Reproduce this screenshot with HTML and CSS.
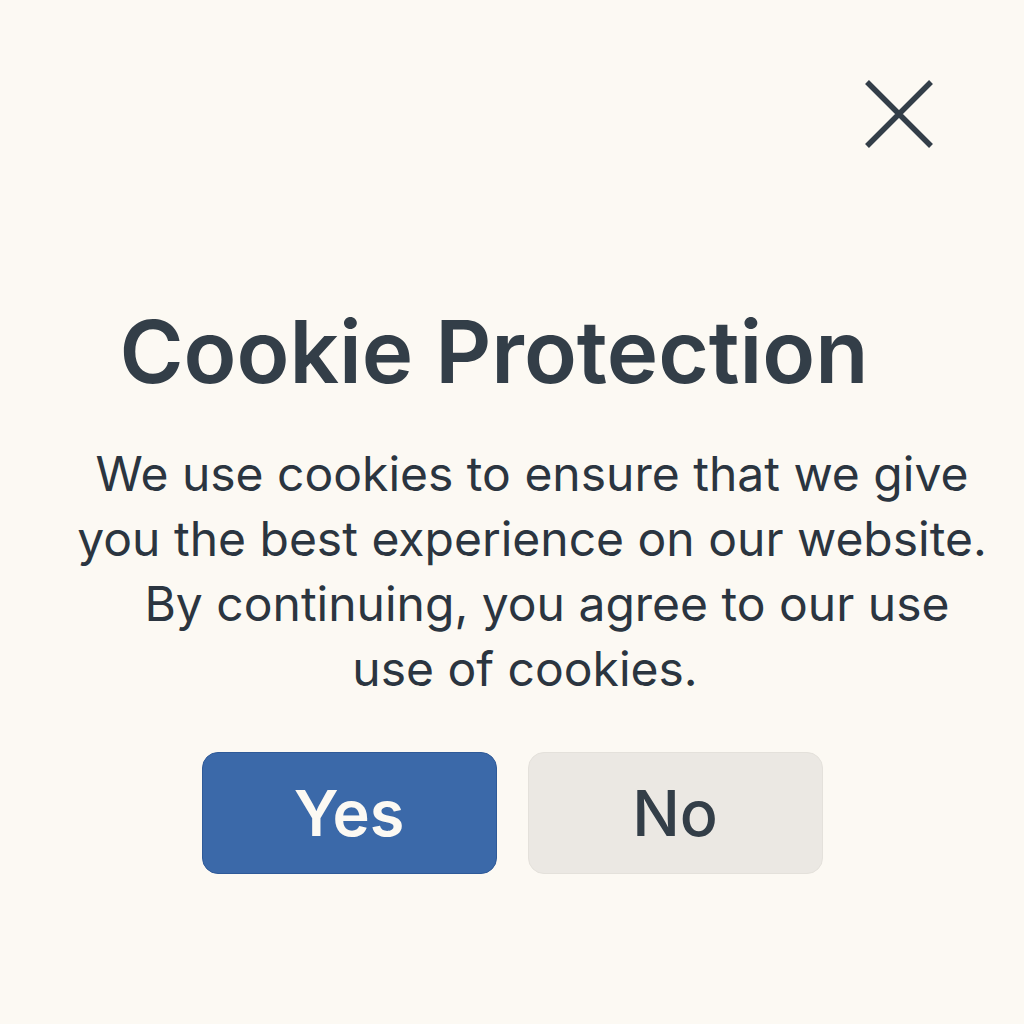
FILE: index.html
```html
<!DOCTYPE html>
<html lang="en">
<head>
<meta charset="utf-8">
<title>Cookie Protection</title>
<link rel="stylesheet" href="styles.css">
</head>
<body>
<div class="page">
  <div class="top-row">
    <button class="close" aria-label="Close">
      <svg width="68" height="68" viewBox="0 0 68 68" fill="none">
        <path d="M2 2 L66 66 M66 2 L2 66" stroke="#333e48" stroke-width="5.5" stroke-linecap="butt"/>
      </svg>
    </button>
  </div>
  <h1 class="title">Cookie Protection</h1>
  <p class="message">
    <span class="line l1">We use cookies to ensure that we give</span>
    <span class="line l2">you the best experience on our website.</span>
    <span class="line l3">By continuing, you agree to our use</span>
    <span class="line l4">use of cookies.</span>
  </p>
  <div class="actions">
    <button class="btn btn-yes">Yes</button>
    <button class="btn btn-no">No</button>
  </div>
</div>
</body>
</html>
```
FILE: styles.css
```css
html, body {
  margin: 0;
  padding: 0;
  background: #fcf9f3;
}
body {
  font-family: Inter, "Noto Sans", sans-serif;
  color: #2f3a44;
}
.page {
  width: 1024px;
  height: 1024px;
  display: flex;
  flex-direction: column;
  align-items: center;
}
.top-row {
  align-self: stretch;
  display: flex;
  justify-content: flex-end;
  padding: 80px 91px 0 0;
}
.close {
  background: none;
  border: 0;
  padding: 0;
  width: 68px;
  height: 68px;
  display: block;
}
.close svg { display: block; }
.title {
  margin: 160px 0 0 0;
  font-size: 87px;
  font-weight: 600;
  line-height: 1;
  letter-spacing: 0;
  color: #333e48;
  transform: translateX(-18px);
}
.message {
  margin: 46px 0 0 0;
  padding-left: 40px;
  font-size: 48px;
  font-weight: 400;
  line-height: 65px;
  text-align: center;
  color: #2b3540;
  display: flex;
  flex-direction: column;
  align-items: center;
}
.line { display: block; white-space: nowrap; }
.l3 { padding-left: 30px; }
.l4 { padding-right: 14px; }
.actions {
  margin-top: 51px;
  display: flex;
  gap: 31px;
}
.btn {
  width: 295px;
  height: 122px;
  border-radius: 16px;
  font-family: Inter, "Noto Sans", sans-serif;
  font-size: 63px;
  line-height: 1;
  padding: 0;
}
.btn-yes {
  background: #3b69a9;
  border: 1.5px solid #2f5a98;
  color: #fcf9f3;
  font-weight: 600;
}
.btn-no {
  background: #ebe8e3;
  border: 1.5px solid #e4e1db;
  color: #333e48;
  font-weight: 500;
}
```
